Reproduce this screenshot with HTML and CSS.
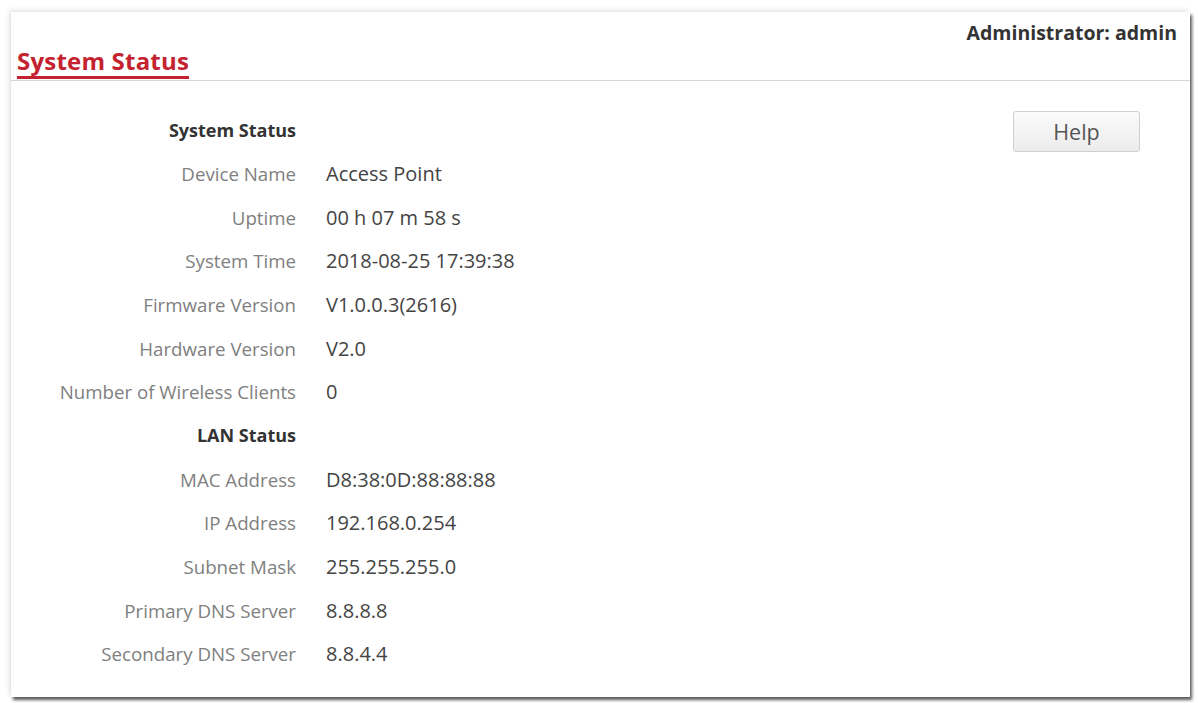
FILE: index.html
```html
<!DOCTYPE html>
<html>
<head>
<meta charset="utf-8">
<link rel="stylesheet" href="styles.css">
</head>
<body>
<div class="panel">
  <div class="header">
    <div class="title">System Status</div>
    <div class="admin">Administrator: admin</div>
  </div>
  <div class="content">
    <div class="info">
      <div class="section">System Status</div><div></div>
      <div class="label">Device Name</div><div class="value">Access Point</div>
      <div class="label">Uptime</div><div class="value">00 h 07 m 58 s</div>
      <div class="label">System Time</div><div class="value">2018-08-25 17:39:38</div>
      <div class="label">Firmware Version</div><div class="value">V1.0.0.3(2616)</div>
      <div class="label">Hardware Version</div><div class="value">V2.0</div>
      <div class="label">Number of Wireless Clients</div><div class="value">0</div>
      <div class="section">LAN Status</div><div></div>
      <div class="label">MAC Address</div><div class="value">D8:38:0D:88:88:88</div>
      <div class="label">IP Address</div><div class="value">192.168.0.254</div>
      <div class="label">Subnet Mask</div><div class="value">255.255.255.0</div>
      <div class="label">Primary DNS Server</div><div class="value">8.8.8.8</div>
      <div class="label">Secondary DNS Server</div><div class="value">8.8.4.4</div>
    </div>
    <button class="help">Help</button>
  </div>
</div>
</body>
</html>
```
FILE: styles.css
```css
html, body {
  margin: 0;
  padding: 0;
  background: #ffffff;
}
body {
  font-family: "Open Sans", "Noto Sans", sans-serif;
  padding: 12px 8px 6px 11px;
}
.panel {
  width: 1179px;
  height: 685px;
  background: #fff;
  box-shadow: 2px 3px 3px rgba(0,0,0,0.65), -2px -2px 5px rgba(0,0,0,0.10);
  box-sizing: border-box;
}
.header {
  height: 69px;
  border-bottom: 1px solid #d6d6d6;
  display: flex;
  justify-content: space-between;
  box-sizing: border-box;
  padding: 0 13px 0 6px;
}
.title {
  align-self: flex-end;
  color: #c4222f;
  font-weight: 700;
  font-size: 24px;
  line-height: 30px;
  letter-spacing: 0.2px;
  border-bottom: 3px solid #c4222f;
  margin-bottom: 1px;
}
.admin {
  align-self: flex-start;
  color: #333;
  font-weight: 700;
  font-size: 19.5px;
  line-height: 24px;
  padding-top: 9px;
}
.content {
  display: flex;
  justify-content: space-between;
  padding: 27px 50px 0 0;
}
.info {
  display: grid;
  grid-template-columns: 285px auto;
  column-gap: 30px;
  grid-auto-rows: 43.67px;
  align-items: center;
}
.section {
  text-align: right;
  font-weight: 700;
  font-size: 18px;
  color: #333;
}
.label {
  text-align: right;
  font-size: 18.7px;
  color: #808080;
}
.value {
  font-size: 20px;
  color: #444;
}
.help {
  margin-top: 3px;
  width: 127px;
  height: 41px;
  border: 1px solid #cfcfcf;
  border-radius: 3px;
  background: linear-gradient(#fbfbfb, #ececec);
  font-family: "Open Sans", "Noto Sans", sans-serif;
  font-size: 21.5px;
  color: #555;
}
```
